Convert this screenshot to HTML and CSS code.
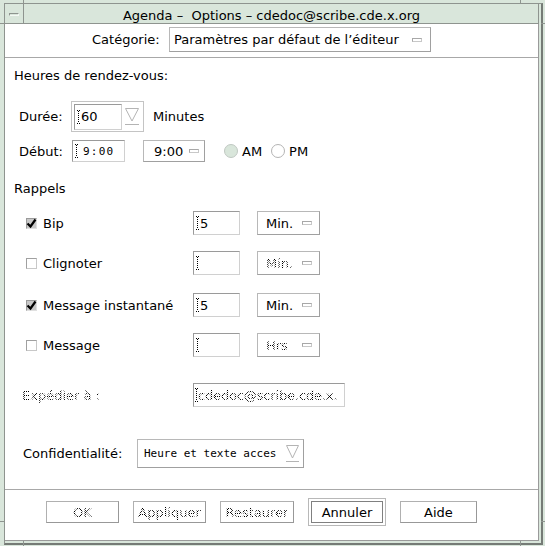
FILE: index.html
```html
<!DOCTYPE html>
<html lang="fr">
<head>
<meta charset="utf-8">
<title>Agenda – Options</title>
<link rel="stylesheet" href="styles.css">
</head>
<body>
<div class="window">
  <span class="tick tick-t1"></span><span class="tick tick-t2"></span>
  <span class="tick tick-b1"></span><span class="tick tick-b2"></span>
  <span class="tick tick-l1"></span><span class="tick tick-l2"></span>
  <span class="tick tick-r1"></span><span class="tick tick-r2"></span>
  <div class="inner">
    <div class="titlebar">
      <div class="menu-btn"><span class="menu-bar"></span></div>
      <div class="title">Agenda –&nbsp; Options – cdedoc@scribe.cde.x.org</div>
    </div>
    <div class="client">
      <div class="cat-row">
        <span class="cat-label">Catégorie:</span>
        <div class="dd dd-cat"><span>Paramètres par défaut de l’éditeur</span><span class="ddicon"></span></div>
      </div>

      <div class="body">
        <div class="hdr hdr-1">Heures de rendez-vous:</div>

        <div class="row row-duree">
          <span class="lbl-time">Durée:</span>
          <div class="spinbox">
            <div class="field field-spin"><svg class="ibeam" width="5" height="14" viewBox="0 0 5 14"><path d="M0 0.5H4M0 13.5H4" stroke="#000" stroke-dasharray="1 1"/><path d="M1.5 1V13" stroke="#000" stroke-dasharray="1 1"/></svg><span class="val">60</span></div>
            <svg class="spin" width="16" height="19" viewBox="0 0 16 19"><path d="M1.5 1.5H14.5L8 14Z" fill="#fff" stroke="#b4b4b4"/><path d="M1 17.5H15" stroke="#b4b4b4"/></svg>
          </div>
          <span class="minutes">Minutes</span>
        </div>

        <div class="row row-debut">
          <span class="lbl-time">Début:</span>
          <div class="field field-debut"><svg class="ibeam" width="5" height="14" viewBox="0 0 5 14"><path d="M0 0.5H4M0 13.5H4" stroke="#000" stroke-dasharray="1 1"/><path d="M1.5 1V13" stroke="#000" stroke-dasharray="1 1"/></svg><span class="mono mono-time">9:00</span></div>
          <div class="dd dd-time"><span>9:00</span><span class="ddicon"></span></div>
          <span class="radio on"></span><span class="rlabel">AM</span>
          <span class="radio radio-pm"></span><span class="rlabel">PM</span>
        </div>

        <div class="hdr hdr-2">Rappels</div>

        <div class="row rem rem-1">
          <div class="rem-name"><span class="cb on"><svg width="11" height="11" viewBox="0 0 11 11"><path d="M1.5 5.5L4.5 8.5L9.5 1.5" fill="none" stroke="#000" stroke-width="2.2"/></svg></span><span>Bip</span></div>
          <div class="field field-rem"><svg class="ibeam" width="5" height="14" viewBox="0 0 5 14"><path d="M0 0.5H4M0 13.5H4" stroke="#000" stroke-dasharray="1 1"/><path d="M1.5 1V13" stroke="#000" stroke-dasharray="1 1"/></svg><span class="val">5</span></div>
          <div class="dd dd-unit"><span>Min.</span><span class="ddicon"></span></div>
        </div>

        <div class="row rem rem-2">
          <div class="rem-name"><span class="cb"></span><span>Clignoter</span></div>
          <div class="field field-rem"><svg class="ibeam" width="5" height="14" viewBox="0 0 5 14"><path d="M0 0.5H4M0 13.5H4" stroke="#000" stroke-dasharray="1 1"/><path d="M1.5 1V13" stroke="#000" stroke-dasharray="1 1"/></svg></div>
          <div class="dd dd-unit"><span class="dis">Min.</span><span class="ddicon"></span></div>
        </div>

        <div class="row rem rem-3">
          <div class="rem-name"><span class="cb on"><svg width="11" height="11" viewBox="0 0 11 11"><path d="M1.5 5.5L4.5 8.5L9.5 1.5" fill="none" stroke="#000" stroke-width="2.2"/></svg></span><span>Message instantané</span></div>
          <div class="field field-rem"><svg class="ibeam" width="5" height="14" viewBox="0 0 5 14"><path d="M0 0.5H4M0 13.5H4" stroke="#000" stroke-dasharray="1 1"/><path d="M1.5 1V13" stroke="#000" stroke-dasharray="1 1"/></svg><span class="val">5</span></div>
          <div class="dd dd-unit"><span>Min.</span><span class="ddicon"></span></div>
        </div>

        <div class="row rem rem-4">
          <div class="rem-name"><span class="cb"></span><span>Message</span></div>
          <div class="field field-rem"><svg class="ibeam" width="5" height="14" viewBox="0 0 5 14"><path d="M0 0.5H4M0 13.5H4" stroke="#000" stroke-dasharray="1 1"/><path d="M1.5 1V13" stroke="#000" stroke-dasharray="1 1"/></svg></div>
          <div class="dd dd-unit dd-hrs"><span class="dis">Hrs</span><span class="ddicon"></span></div>
        </div>

        <div class="row row-exp">
          <span class="exp-label dis">Expédier à :</span>
          <div class="field field-exp"><svg class="ibeam" width="5" height="14" viewBox="0 0 5 14"><path d="M0 0.5H4M0 13.5H4" stroke="#000" stroke-dasharray="1 1"/><path d="M1.5 1V13" stroke="#000" stroke-dasharray="1 1"/></svg><span class="exp-val dis">cdedoc@scribe.cde.x.</span></div>
        </div>

        <div class="row row-conf">
          <span class="conf-label">Confidentialité:</span>
          <div class="dd dd-conf"><span class="mono">Heure et texte acces</span>
            <svg class="spin" width="15" height="19" viewBox="0 0 15 19"><path d="M1.5 1.5H13.5L7.5 14Z" fill="#fff" stroke="#b4b4b4"/><path d="M1 17.5H14" stroke="#b4b4b4"/></svg>
          </div>
        </div>
      </div>

      <div class="buttons">
        <div class="btn btn-ok"><span class="dis">OK</span></div>
        <div class="btn btn-apply"><span class="dis">Appliquer</span></div>
        <div class="btn btn-reset"><span class="dis">Restaurer</span></div>
        <div class="default-ring"><div class="btn btn-cancel">Annuler</div></div>
        <div class="btn btn-help">Aide</div>
      </div>
    </div>
  </div>
</div>
</body>
</html>
```
FILE: styles.css
```css
* { box-sizing: border-box; }
html, body { margin: 0; padding: 0; }
body {
  width: 545px; height: 546px; overflow: hidden;
  font-family: "DejaVu Sans", "Noto Sans", sans-serif;
  font-size: 13px; line-height: 15px; color: #000;
  background: #d9e6db;
}
.window {
  position: relative;
  width: 545px; height: 546px;
  background: #d9e6db;
  padding: 3px 0 0 4px;
}
.tick { position: absolute; background: #8e948f; }
.tick-t1 { left: 23px; top: 0; width: 1px; height: 3px; }
.tick-t2 { left: 520px; top: 0; width: 1px; height: 3px; }
.tick-b1 { left: 23px; top: 541px; width: 1px; height: 5px; }
.tick-b2 { left: 520px; top: 541px; width: 1px; height: 5px; }
.tick-l1 { left: 0; top: 23px; width: 4px; height: 1px; }
.tick-l2 { left: 0; top: 521px; width: 4px; height: 1px; }
.tick-r1 { left: 541px; top: 23px; width: 4px; height: 1px; }
.tick-r2 { left: 541px; top: 521px; width: 4px; height: 1px; }

.inner {
  width: 539px; height: 542px;
  border-left: 1px solid #8e948f; border-top: 1px solid #8e948f;
  border-right: 2px solid #757b76; border-bottom: 2px solid #757b76;
  padding: 0 2px 2px 0;
  display: flex; flex-direction: column;
}
.titlebar {
  height: 20px; flex: none;
  display: flex;
  border-bottom: 1px solid #8e948f;
  border-right: 1px solid #8e948f;
}
.menu-btn {
  width: 19px; flex: none;
  border-right: 1px solid #8e948f;
  position: relative;
}
.menu-bar {
  position: absolute; left: 4px; top: 9px;
  width: 10px; height: 3px;
  border-top: 1px solid #8e948f; border-left: 1px solid #8e948f;
  border-right: 1px solid #f4f8f4; border-bottom: 1px solid #f4f8f4;
}
.title {
  flex: 1; text-align: center;
  padding-right: 19px; padding-top: 4px;
  white-space: nowrap;
}

.client {
  flex: 1;
  background: #fff;
  border-right: 1px solid #9a9a9a;
  border-bottom: 1px solid #9a9a9a;
  display: flex; flex-direction: column;
}
.cat-row {
  height: 34px; flex: none;
  border-bottom: 1px solid #a8a8a8;
  display: flex; align-items: center;
  padding-left: 87px; padding-bottom: 2px;
}
.cat-label { width: 77px; }

.dd {
  display: flex; align-items: center; justify-content: space-between;
  border: 1px solid #b8b8b8;
  border-right-color: #a0a0a0; border-bottom-color: #a0a0a0;
  background: #fff;
}
.ddicon {
  width: 10px; height: 4px; flex: none;
  border: 1px solid #a8a8a8;
  border-right-color: #c8c8c8; border-bottom-color: #c8c8c8;
}
.dd-cat { width: 262px; height: 25px; padding: 0 8px 0 4px; }

.body {
  height: 432px; flex: none;
  border-bottom: 1px solid #a8a8a8;
  padding-left: 9px;
  display: flex; flex-direction: column;
}
.hdr { height: 15px; flex: none; }
.hdr-1 { margin-top: 10px; }
.hdr-2 { margin-top: 19px; }
.row { display: flex; align-items: center; flex: none; }

.lbl-time { width: 57px; padding-left: 5px; flex: none; }
.row-duree { margin-top: 18px; height: 31px; }
.spinbox {
  width: 73px; height: 31px;
  border: 1px solid #c4c4c4;
  display: flex; align-items: center;
  padding: 1px 3px 1px 2px;
  gap: 2px;
}
.field {
  display: flex; align-items: center;
  border: 1px solid #9a9a9a;
  border-right-color: #d0d0d0; border-bottom-color: #d0d0d0;
  background: #fff;
  padding-left: 2px;
  overflow: hidden; white-space: nowrap;
}
.ibeam { flex: none; display: block; }
.val { margin-left: -1px; }
.field-spin { width: 48px; height: 26px; }
.spin { flex: none; display: block; }
.minutes { margin-left: 9px; }

.row-debut { margin-top: 8px; height: 22px; }
.field-debut { width: 53px; height: 22px; margin-left: 1px; }
.mono { font-family: "DejaVu Sans Mono", "Liberation Mono", monospace; font-size: 11px; }
.mono-time { margin-left: 3px; letter-spacing: 1.2px; }
.dd-time { width: 62px; height: 22px; margin-left: 18px; padding: 0 5px 0 10px; }
.radio {
  width: 14px; height: 14px; flex: none;
  border-radius: 50%;
  border: 1px solid #b4b4b4;
  background: #fff;
  margin-left: 19px;
}
.radio.on { background: #d9e6db; border-color: #c0c8c2; }
.radio-pm { margin-left: 9px; }
.rlabel { margin-left: 4px; }

.rem { height: 24px; }
.rem-1 { margin-top: 15px; }
.rem-2 { margin-top: 16px; }
.rem-3 { margin-top: 18px; }
.rem-4 { margin-top: 16px; }
.rem-name { width: 179px; padding-left: 12px; display: flex; align-items: center; gap: 6px; flex: none; }
.cb {
  width: 11px; height: 11px; flex: none;
  border: 1px solid #a0a0a0;
  border-right-color: #c8c8c8; border-bottom-color: #c8c8c8;
  background: #fff;
  display: block; position: relative;
}
.cb.on { background: #c8c8c8; border-color: #9a9a9a #e0e0e0 #e0e0e0 #9a9a9a; }
.cb svg { position: absolute; left: -1px; top: -1px; }
.field-rem { width: 47px; height: 24px; }
.dd-unit { width: 63px; height: 24px; margin-left: 17px; padding: 0 7px 0 8px; }

.row-exp { margin-top: 26px; height: 24px; }
.exp-label { width: 179px; padding-left: 8px; flex: none; }
.field-exp { width: 152px; height: 24px; padding-left: 1px; }
.exp-val { margin-left: -2px; letter-spacing: -0.15px; }

.row-conf { margin-top: 32px; height: 29px; }
.conf-label { width: 123px; padding-left: 9px; flex: none; }
.dd-conf { width: 167px; height: 29px; padding: 0 3px 0 6px; }

.dis {
  color: transparent;
  background-image: repeating-conic-gradient(#000 0 25%, transparent 0 50%);
  background-size: 2px 2px;
  -webkit-background-clip: text;
  background-clip: text;
}

.buttons {
  flex: 1;
  display: flex; align-items: center;
  padding: 0 0 6px 41px;
  gap: 14px;
}
.btn {
  height: 22px; width: 73px; flex: none;
  border: 1px solid #b0b0b0;
  border-right-color: #989898; border-bottom-color: #989898;
  display: flex; align-items: center; justify-content: center;
  background: #fff;
}
.btn-reset { width: 74px; }
.default-ring {
  width: 78px; height: 28px; flex: none;
  border: 1px solid #b8b8b8;
  padding: 2px;
}
.btn-cancel { width: 72px; border-color: #808080; }
.btn-help { width: 77px; }
```
